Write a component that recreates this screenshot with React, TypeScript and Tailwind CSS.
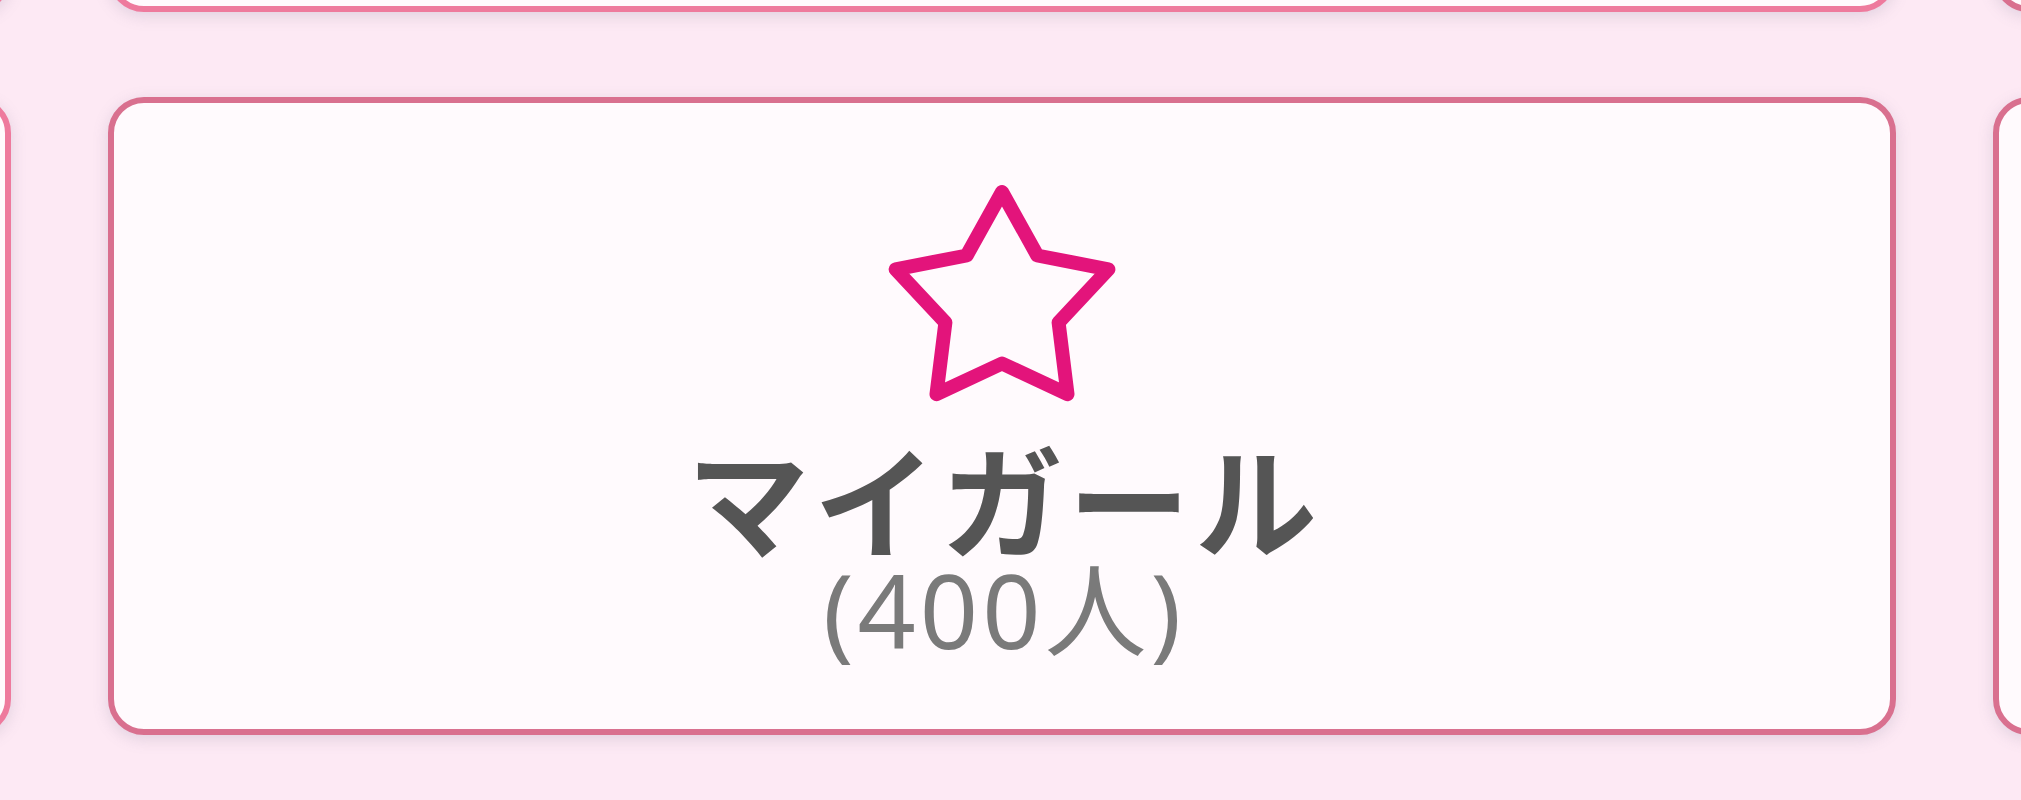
import React from "react";

function Star() {
  return (
    <svg width="244" height="232" viewBox="0 0 244 232" className="block">
      <polygon
        points="122,15 157.3,78.5 228.4,92.3 178.6,145.5 187.5,217.2 122,186.5 56.5,217.2 65.4,145.5 15.6,92.3 86.7,78.5"
        fill="none"
        stroke="#e3147b"
        strokeWidth="14"
        strokeLinejoin="round"
      />
    </svg>
  );
}

function Card({ bright, main }: { bright?: boolean; main?: boolean }) {
  return (
    <div
      className={
        "w-[1788px] h-[638px] shrink-0 rounded-[36px] border-[6px] bg-[#fffafd] shadow-[0_4px_16px_rgba(110,110,140,0.2)] flex flex-col items-center " +
        (bright ? "border-[#ee7a9d]" : "border-[#d9708f]")
      }
    >
      {main && (
        <div className="flex flex-col items-center pt-[74px]">
          <Star />
          <div className="mt-[26px] text-[122px] leading-none font-bold tracking-[5px] text-[#555555] pl-[5px] font-['Noto_Sans_CJK_JP',sans-serif]">
            マイガール
          </div>
          <div className="mt-[2px] text-[102px] leading-none font-normal tracking-[4px] text-[#7a7a7a] pl-[4px] font-['Noto_Sans','Noto_Sans_CJK_JP',sans-serif]">
            (400人)
          </div>
        </div>
      )}
    </div>
  );
}

export default function App() {
  return (
    <div className="w-[2021px] h-[800px] overflow-hidden bg-[#fde9f4]">
      <div className="flex flex-col gap-[85px] -mt-[626px] -ml-[1777px] w-max">
        <div className="flex gap-[97px]">
          <Card bright />
          <Card bright />
          <Card />
        </div>
        <div className="flex gap-[97px]">
          <Card bright />
          <Card main />
          <Card />
        </div>
      </div>
    </div>
  );
}
